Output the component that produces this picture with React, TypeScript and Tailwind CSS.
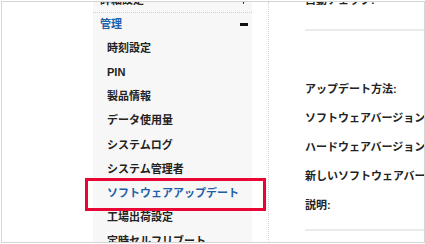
import { Plus } from 'lucide-react';

const menuItems = [
  '時刻設定',
  'PIN',
  '製品情報',
  'データ使用量',
  'システムログ',
  'システム管理者',
  'ソフトウェアアップデート',
  '工場出荷設定',
  '定時セルフリブート',
];

const fields = [
  'アップデート方法:',
  'ソフトウェアバージョン:',
  'ハードウェアバージョン:',
  '新しいソフトウェアバージョン:',
  '説明:',
];

export default function App() {
  return (
    <div className="w-[425px] h-[244px] bg-white pl-px pt-px font-['Liberation_Sans','Noto_Sans_CJK_JP',sans-serif]">
      <div className="w-[424px] h-[242px] border border-[#d6d6d6] overflow-hidden flex bg-white">
        {/* left blank margin */}
        <div className="w-[91px] shrink-0" />

        {/* sidebar */}
        <div className="w-[159px] shrink-0 bg-[#f7f7f7] -mt-[14px] flex flex-col">
          <div className="h-6 shrink-0 flex items-center justify-between pl-[7px] pr-[4px] text-[11px] font-bold text-[#222]">
            <span>詳細設定</span>
            <Plus size={9} strokeWidth={3} className="text-[#222]" />
          </div>
          <div className="h-[24px] shrink-0 border-t border-dotted border-[#cfcfcf] flex items-center justify-between pl-[7px] pr-[4px]">
            <span className="text-[11px] font-bold text-[#1d5fa8]">管理</span>
            <span className="w-[8px] h-[3px] bg-[#111]" />
          </div>
          {menuItems.map((item) => {
            const active = item === 'ソフトウェアアップデート';
            return (
              <div key={item} className="relative h-[24.2px] shrink-0 flex items-center pl-[14px]">
                <span className={`text-[11px] font-bold whitespace-nowrap ${active ? 'text-[#1d5fa8]' : 'text-[#222]'}`}>
                  {item}
                </span>
                {active && (
                  <div className="absolute -left-[8px] -right-[14px] -top-[3px] -bottom-[6px] border-[3px] border-[#ea0634] pointer-events-none" />
                )}
              </div>
            );
          })}
        </div>

        {/* gap + dotted divider */}
        <div className="w-4 shrink-0" />
        <div className="w-0 shrink-0 border-l border-dotted border-[#d4d4d4]" />
        <div className="w-9 shrink-0" />

        {/* content */}
        <div className="flex-1 min-w-0 -mt-[14px] flex flex-col">
          <div className="h-6 shrink-0 flex items-center text-[11px] font-bold text-[#222] whitespace-nowrap">自動チェック:</div>
          <div className="h-[19px] shrink-0 border-b-2 border-[#ebebeb]" />
          <div className="h-[44px] shrink-0" />
          {fields.map((f) => (
            <div key={f} className="h-[29px] shrink-0 flex items-center text-[11px] font-bold text-[#222] whitespace-nowrap">
              {f}
            </div>
          ))}
          <div className="h-[11px] shrink-0 border-b-2 border-[#ebebeb]" />
        </div>
      </div>
    </div>
  );
}
